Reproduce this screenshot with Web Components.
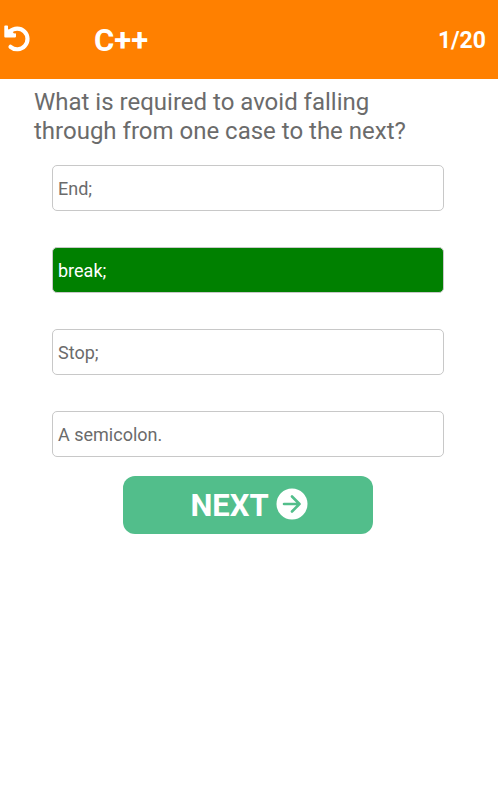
<!DOCTYPE html>
<html lang="en">
<head>
<meta charset="utf-8">
<meta name="viewport" content="width=device-width, initial-scale=1">
<title>C++ Quiz</title>
<style>
  body {
    margin: 0;
    background: #fff;
    font-family: Roboto, "Liberation Sans", sans-serif;
  }
</style>
</head>
<body>
<quiz-page>
  <quiz-header slot="header" count="1/20">C++</quiz-header>
  <quiz-question>What is required to avoid falling through from one case to the next?</quiz-question>
  <quiz-answers>
    <quiz-answer>End;</quiz-answer>
    <quiz-answer correct>break;</quiz-answer>
    <quiz-answer>Stop;</quiz-answer>
    <quiz-answer>A semicolon.</quiz-answer>
  </quiz-answers>
  <next-button>NEXT</next-button>
</quiz-page>

<script>
// page shell
class QuizPage extends HTMLElement {
    constructor() {
        super();
        this.attachShadow({ mode: 'open' });
        this.shadowRoot.innerHTML = `
      <style>
        :host {
          display: block;
        }

        main {
          display: flex;
          flex-direction: column;
        }
      </style>

      <slot name="header"></slot>
      <main><slot></slot></main>
    `;
    }
}

// orange bar with restart, title and progress
class QuizHeader extends HTMLElement {
    constructor() {
        super();
        this.attachShadow({ mode: 'open' });
        this.render();
    }
    render() {
        this.shadowRoot.innerHTML = `
      <style>
        :host {
          display: block;
        }

        header {
          display: flex;
          align-items: center;
          box-sizing: border-box;
          height: 79px;
          padding: 2px 12px 0 4px;
          background: #ff8000;
          color: #fff;
        }

        button {
          display: flex;
          padding: 0 0 4px;
          border: 0;
          background: none;
          color: inherit;
          cursor: pointer;
        }

        h1 {
          flex: 1;
          margin: 0 0 0 64px;
          font-size: 31px;
          font-weight: 700;
        }

        span {
          font-size: 23px;
          font-weight: 700;
        }
      </style>

      <header>
        <button type="button" aria-label="Restart">
          <svg width="26" height="28" viewBox="0 0 26 28" aria-hidden="true">
            <path d="M6 6.600A10.300 10.300 0 1 1 6.500 21.800" fill="none" stroke="#fff" stroke-width="4.200" stroke-linecap="round"/>
            <path d="M1.200 .4h1.900q.9 0 .9.900v3L7 5l3 3.500 1.200-.2q.8.200.8 1v2.300q0 .8-.8.800H1.200q-.9 0-.9-.9V1.300q0-.9.9-.9z" fill="#fff"/>
          </svg>
        </button>
        <h1><slot></slot></h1>
        <span>${this.getAttribute('count')}</span>
      </header>
    `;
    }
}

class QuizQuestion extends HTMLElement {
    constructor() {
        super();
        this.attachShadow({ mode: 'open' });
        this.shadowRoot.innerHTML = `
      <style>
        :host {
          display: block;
          padding: 9px 54px 0 34px;
        }

        h2 {
          margin: 0;
          color: #6b6b6b;
          font-size: 24px;
          font-weight: 400;
          line-height: 29px;
        }
      </style>

      <h2><slot></slot></h2>
    `;
    }
}

class QuizAnswers extends HTMLElement {
    constructor() {
        super();
        this.attachShadow({ mode: 'open' });
        this.shadowRoot.innerHTML = `
      <style>
        :host {
          display: flex;
          flex-direction: column;
          gap: 36px;
          padding: 19px 54px 0 52px;
        }
      </style>

      <slot></slot>
    `;
    }
}

// one choice, green when it has the correct attribute
class QuizAnswer extends HTMLElement {
    constructor() {
        super();
        this.attachShadow({ mode: 'open' });
        this.shadowRoot.innerHTML = `
      <style>
        :host {
          display: block;
        }

        button {
          display: block;
          box-sizing: border-box;
          width: 100%;
          height: 46px;
          padding: 2px 5px 0;
          border: 1px solid #c8c8c8;
          border-radius: 5px;
          background: #fff;
          color: #6b6b6b;
          font: 400 18px/24px Roboto, "Liberation Sans", sans-serif;
          text-align: left;
          cursor: pointer;
        }

        :host([correct]) button {
          background: #008000;
          color: #fff;
        }
      </style>

      <button type="button"><slot></slot></button>
    `;
    }
}

class NextButton extends HTMLElement {
    constructor() {
        super();
        this.attachShadow({ mode: 'open' });
        this.shadowRoot.innerHTML = `
      <style>
        :host {
          display: flex;
          justify-content: center;
          padding: 19px 2px 0 0;
        }

        button {
          display: flex;
          align-items: center;
          justify-content: center;
          gap: 7px;
          box-sizing: content-box;
          width: 50%;
          height: 56px;
          padding: 2px 0 0 2px;
          border: 0;
          border-radius: 12px;
          background: #52be8b;
          color: #fff;
          font: 700 31px/40px Roboto, "Liberation Sans", sans-serif;
          cursor: pointer;
        }

        svg {
          padding-bottom: 4px;
        }
      </style>

      <button type="button">
        <slot></slot>
        <svg width="32" height="32" viewBox="0 0 32 32" aria-hidden="true">
          <circle cx="16" cy="16" r="15.500" fill="#fff"/>
          <path d="M8 16h15.500M16 8.500l7.500 7.500-7.500 7.500" fill="none" stroke="#52be8b" stroke-width="2.600" stroke-linecap="round" stroke-linejoin="round"/>
        </svg>
      </button>
    `;
    }
}

customElements.define('quiz-page', QuizPage);
customElements.define('quiz-header', QuizHeader);
customElements.define('quiz-question', QuizQuestion);
customElements.define('quiz-answers', QuizAnswers);
customElements.define('quiz-answer', QuizAnswer);
customElements.define('next-button', NextButton);
</script>
</body>
</html>
